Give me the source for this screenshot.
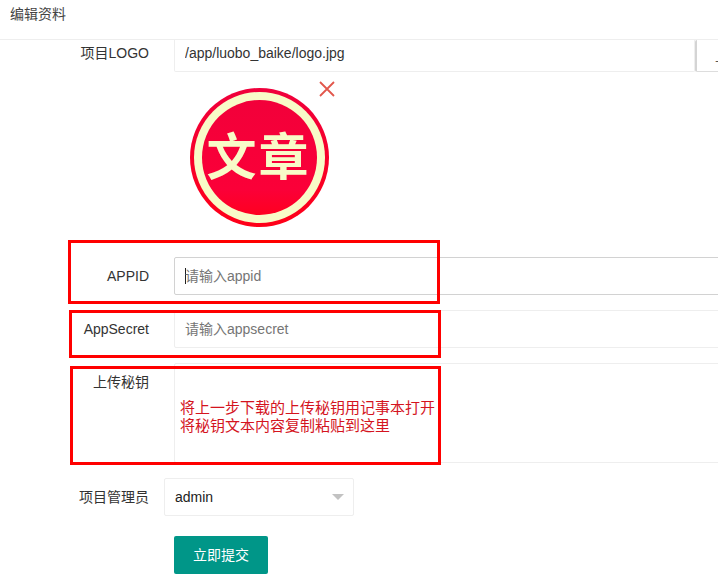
<div class="page">
  <header class="title">编辑资料</header>
  <form class="form">
    <div class="row logo-row">
      <span class="label">项目LOGO</span>
      <input class="field logo-input" value="/app/luobo_baike/logo.jpg" />
      <button type="button" class="upload">上传</button>
    </div>

    <div class="preview">
      <svg class="logo" viewBox="0 0 140 140" width="140" height="140" aria-hidden="true">
        <defs>
          <linearGradient id="rim" x1="0" y1="0" x2="0" y2="1">
            <stop offset="0" stop-color="#f0003c" />
            <stop offset="1" stop-color="#ff0018" />
          </linearGradient>
          <linearGradient id="core" x1="0" y1="0" x2="0" y2="1">
            <stop offset="0" stop-color="#f2003a" />
            <stop offset="0.78" stop-color="#fb0038" />
            <stop offset="1" stop-color="#ff0020" />
          </linearGradient>
        </defs>
        <circle cx="69.5" cy="69.5" r="69.5" fill="url(#rim)" />
        <circle cx="69.5" cy="69.5" r="65.5" fill="#f8fbc8" />
        <circle cx="69.5" cy="69.5" r="57.5" fill="url(#core)" />
        <text x="68.5" y="87" class="logo-text">文章</text>
      </svg>
      <svg class="close" viewBox="0 0 16 16" width="16" height="16" aria-hidden="true">
        <path d="M1 1 15 15M15 1 1 15" />
      </svg>
    </div>

    <div class="row appid-row">
      <span class="label">APPID</span>
      <div class="field focused">
        <i class="caret"></i><span class="ph">请输入appid</span>
      </div>
    </div>

    <div class="row secret-row">
      <span class="label">AppSecret</span>
      <div class="field"><span class="ph">请输入appsecret</span></div>
    </div>

    <div class="row area-row">
      <span class="label area-label">上传秘钥</span>
      <div class="field area"></div>
    </div>

    <div class="row admin-row">
      <span class="label">项目管理员</span>
      <div class="select">
        <span>admin</span>
        <i class="arrow"></i>
      </div>
    </div>

    <button type="button" class="submit">立即提交</button>
  </form>

  <div class="mark mark-a"></div>
  <div class="mark mark-b"></div>
  <div class="mark mark-c">
    <p>将上一步下载的上传秘钥用记事本打开<br />将秘钥文本内容复制粘贴到这里</p>
  </div>
</div>

<style>
  :global(body) {
    margin: 0;
    background: #fff;
  }
  .page {
    position: relative;
    width: 718px;
    height: 578px;
    overflow: hidden;
    background: #fff;
    color: #333;
    font: 14px/20px "Liberation Sans", "Noto Sans CJK SC", sans-serif;
  }
  .page,
  .page * {
    box-sizing: border-box;
  }
  .title {
    height: 40px;
    padding: 4px 10px 0;
    font-size: 14px;
    color: #444;
    border-bottom: 1px solid #eee;
  }
  .form {
    display: flex;
    flex-direction: column;
  }
  .row {
    display: flex;
    align-items: center;
    flex: none;
  }
  .label {
    flex: none;
    width: 149px;
    text-align: right;
    color: #333;
    font-size: 14px;
  }
  .field {
    flex: none;
    width: 900px;
    height: 38px;
    margin-left: 25px;
    padding: 0 10px;
    display: flex;
    align-items: center;
    border: 1px solid #eee;
    border-radius: 2px;
    background: #fff;
  }
  .logo-row {
    height: 32px;
    align-items: flex-start;
  }
  .logo-row .label {
    padding-top: 3px;
  }
  .logo-input {
    width: 521px;
    height: 32px;
    padding-bottom: 6px;
    border-top: 0;
    outline: 0;
    font: inherit;
    color: #333;
    border-radius: 0 0 2px 2px;
  }
  .upload {
    flex: none;
    width: 100px;
    height: 32px;
    margin-left: 0;
    padding: 0;
    border: 1px solid #ddd;
    border-top: 0;
    border-left: 2px solid #d4d4d4;
    background: #fff;
    color: #555;
    font: inherit;
    text-align: left;
    text-indent: 18px;
    border-radius: 2px;
  }
  .preview {
    position: relative;
    height: 185px;
    flex: none;
  }
  .logo {
    position: absolute;
    left: 190px;
    top: 16px;
  }
  .logo-text {
    font: 700 50px "Noto Sans CJK SC", sans-serif;
    letter-spacing: 2px;
    fill: #f8fbc8;
    text-anchor: middle;
  }
  .close {
    position: absolute;
    left: 319px;
    top: 9px;
  }
  .close path {
    stroke: #e2574c;
    stroke-width: 1.8;
    fill: none;
  }
  .focused {
    border-color: #d2d2d2;
  }
  .caret {
    width: 1px;
    height: 16px;
    margin-left: 0;
    margin-right: -1px;
    background: #222;
  }
  .ph {
    color: #757575;
  }
  .secret-row {
    margin-top: 15px;
  }
  .area-row {
    margin-top: 15px;
    align-items: flex-start;
  }
  .area-label {
    padding-top: 9px;
  }
  .area {
    height: 100px;
  }
  .admin-row {
    margin-top: 15px;
  }
  .select {
    flex: none;
    width: 190px;
    height: 38px;
    margin-left: 15px;
    padding: 0 9px 0 10px;
    display: flex;
    align-items: center;
    justify-content: space-between;
    border: 1px solid #eee;
    border-radius: 2px;
    color: #222;
  }
  .arrow {
    width: 0;
    height: 0;
    border: 6px solid transparent;
    border-top: 6px solid #c2c2c2;
    border-bottom: 0;
  }
  .submit {
    flex: none;
    align-self: flex-start;
    width: 94px;
    height: 38px;
    margin: 20px 0 0 174px;
    padding: 0;
    border: 0;
    border-radius: 2px;
    background: #009688;
    color: #fff;
    font: inherit;
  }
  .mark {
    position: absolute;
    border: 3px solid #f00;
  }
  .mark-a {
    left: 68px;
    top: 240px;
    width: 372px;
    height: 64px;
  }
  .mark-b {
    left: 69px;
    top: 310px;
    width: 372px;
    height: 48px;
  }
  .mark-c {
    left: 70px;
    top: 366px;
    width: 371px;
    height: 99px;
  }
  .mark-c p {
    margin: 0;
    padding: 30px 0 0 107px;
    color: #d4141e;
    font-size: 15px;
    line-height: 18px;
    white-space: nowrap;
  }
</style>
